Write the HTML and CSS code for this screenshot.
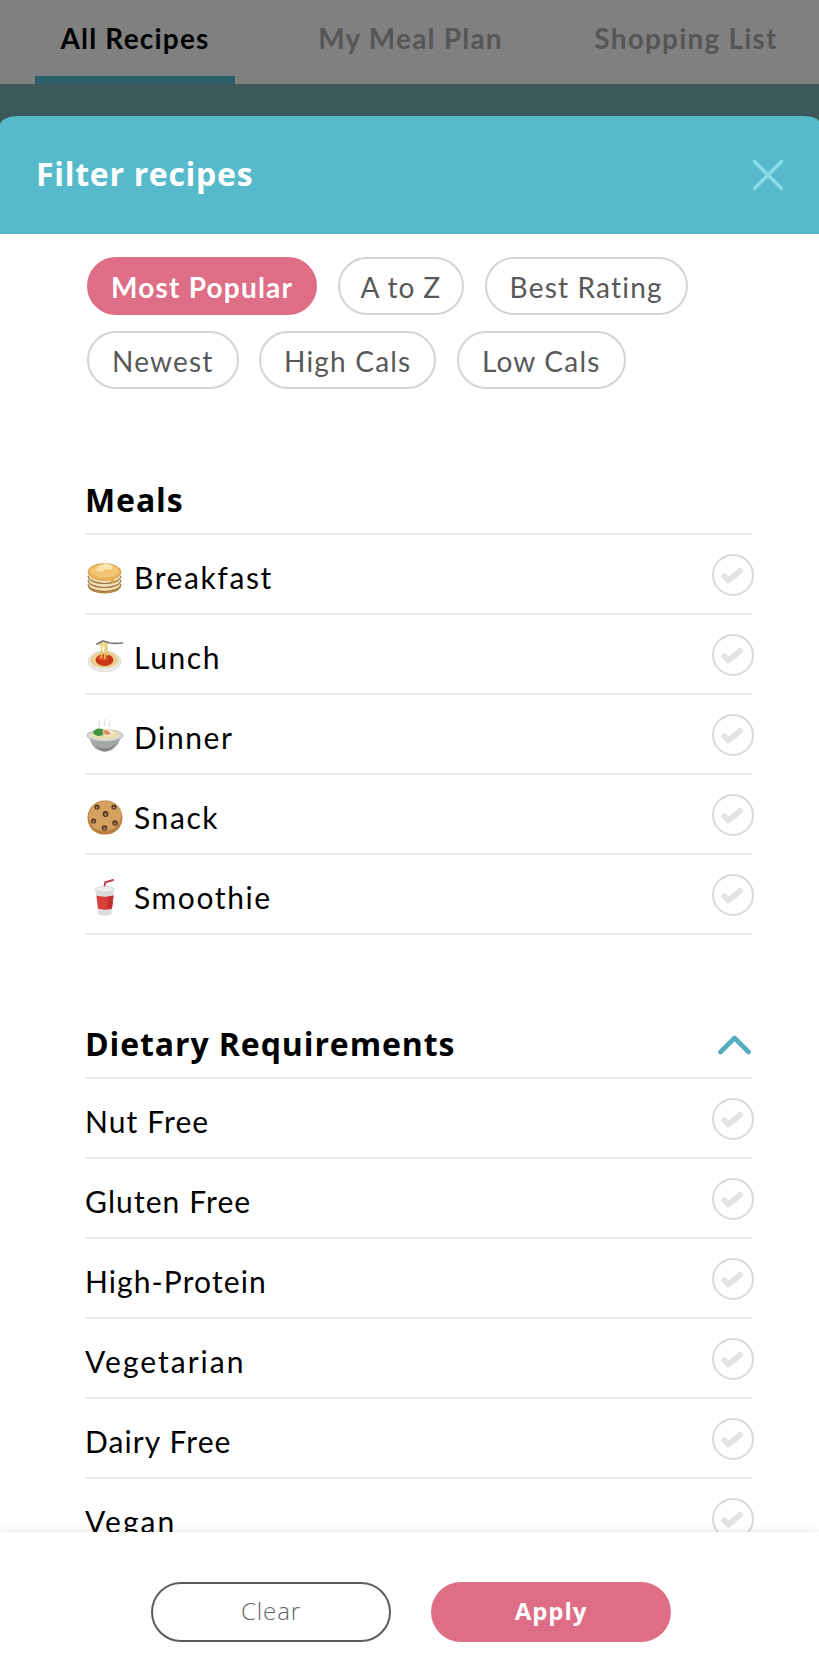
FILE: index.html
```html
<!DOCTYPE html>
<html lang="en">
  <head>
    <meta charset="UTF-8" />
    <meta name="viewport" content="width=device-width, initial-scale=1.0" />
    <title>Filter recipes</title>
    <link rel="stylesheet" href="styles.css" />
  </head>
  <body>
    <!-- shared check icon -->
    <svg class="defs" width="0" height="0">
      <symbol id="check" viewBox="0 0 42 42">
        <circle cx="21" cy="21" r="20" fill="#fff" stroke="#d9d9da" stroke-width="2" />
        <path d="M12.500 22.500 L16.500 26.500 L28 17" fill="none" stroke="#e3e3e4" stroke-width="6" stroke-linecap="round" stroke-linejoin="round" />
      </symbol>
    </svg>

    <nav class="tabs">
      <a class="tab active">All Recipes</a>
      <a class="tab">My Meal Plan</a>
      <a class="tab">Shopping List</a>
    </nav>

    <div class="sheet">
      <header class="sheet-header">
        <h1>Filter recipes</h1>
        <svg class="close" width="30" height="30" viewBox="0 0 30 30">
          <path d="M1.5 1.5 L28.5 28.5 M28.5 1.5 L1.5 28.5" />
        </svg>
      </header>

      <main class="content">
        <div class="chips">
          <button class="chip selected">Most Popular</button>
          <button class="chip chip-short">A to Z</button>
          <button class="chip">Best Rating</button>
          <button class="chip">Newest</button>
          <button class="chip">High Cals</button>
          <button class="chip">Low Cals</button>
        </div>

        <section>
          <div class="section-title"><h2>Meals</h2></div>
          <ul class="meals">
            <li>
              <svg class="emoji" viewBox="0 0 38 38">
                <path d="M2 13 V26 C2 37 35 37 35 26 V13Z" fill="#f3dfb5" />
                <path d="M2 17 C3 27 34 27 35 17 M2 21 C3 31 34 31 35 21 M2 25 C3 35 34 35 35 25" fill="none" stroke="#9c7443" stroke-width="1.2" />
                <path d="M2.5 27 C5 36 32 36 34.5 27" fill="none" stroke="#b98442" stroke-width="1.4" />
                <ellipse cx="18.5" cy="13" rx="16.5" ry="8.5" fill="#e9b45c" stroke="#d6994a" stroke-width=".8" />
                <ellipse cx="18.5" cy="12" rx="14" ry="6.5" fill="#f3c673" />
                <path d="M13 7 L20 4 L27 7 L25 11 L20 10 L16 13 L10 11Z" fill="#fbe7ac" />
                <path d="M24 21 L28 20 L27 25Z" fill="#e4a52e" />
              </svg>
              <span>Breakfast</span>
              <svg class="check"><use href="#check" /></svg>
            </li>
            <li>
              <svg class="emoji" viewBox="0 0 38 38">
                <ellipse cx="18.5" cy="22.5" rx="16.5" ry="10.5" fill="#e9e9e6" stroke="#d0d0cc" stroke-width=".6" />
                <ellipse cx="18.5" cy="21" rx="14" ry="8" fill="#edd695" />
                <ellipse cx="18.5" cy="20.5" rx="12.5" ry="7" fill="none" stroke="#d8b968" stroke-width=".8" stroke-dasharray="3 1" />
                <ellipse cx="18.5" cy="21" rx="9" ry="6" fill="#c93518" />
                <ellipse cx="17" cy="19" rx="5" ry="2.6" fill="#dd5324" />
                <path d="M16 4 C14 9 17 13 15 19 M19 4 C20 9 18 13 19 20 M21 5 C20 9 22 13 21 17" fill="none" stroke="#e8c767" stroke-width="1.5" />
                <path d="M12 6 C15 1 21 1 23 5 C20 8 15 8 12 6Z" fill="#efd98e" />
                <path d="M11 5 L17 2 L24 4 C29 5 32 4 36.5 4" fill="none" stroke="#77797b" stroke-width="1.7" stroke-linecap="round" />
              </svg>
              <span>Lunch</span>
              <svg class="check"><use href="#check" /></svg>
            </li>
            <li>
              <svg class="emoji" viewBox="0 0 38 38">
                <path d="M14 8 C11 5 15 4 13 1 M19 7 C17 4 20 3 19 0 M24 8 C21 5 25 4 24 1" fill="none" stroke="#dedede" stroke-width="1.3" />
                <path d="M3 17 C5 26 9 32 18.5 32.5 C28 32 33 26 35 17Z" fill="#a5a6a6" />
                <path d="M10 26 C14 30 24 31 29 25 C27 31 22 32.5 18.5 32.5 C15 32.5 12 30 10 26Z" fill="#858686" />
                <ellipse cx="19" cy="16.5" rx="18" ry="6" fill="#d6d8d4" stroke="#aaacab" stroke-width=".8" />
                <ellipse cx="19" cy="15.5" rx="14.5" ry="5" fill="#e8ddb2" />
                <path d="M7 14 C8 9 15 8 19 12 C19 17 11 19 7 14Z" fill="#3d943d" />
                <path d="M16 12 C19 8 27 9 29 14 L23 18 L18 16Z" fill="#f5e5cc" />
                <path d="M16 12 L21 11 L25 15 L20 16Z" fill="#da8d59" />
              </svg>
              <span>Dinner</span>
              <svg class="check"><use href="#check" /></svg>
            </li>
            <li>
              <svg class="emoji" viewBox="0 0 38 38">
                <path d="M19 1.5 C28 1 36 8 36.5 18 C37 28 29 36 19 35.5 C9 36 1 28 1.5 18 C2 8 10 1 19 1.5Z" fill="#b97e40" />
                <path d="M19 2 C28 2 35 8 35.5 16 C35 26 27 32 18 32 C9 32 3 26 2.5 17 C3 8 10 2 19 2Z" fill="#d4a160" />
                <g fill="#573520">
                  <circle cx="11" cy="8" r="2.6" /><circle cx="28" cy="8" r="2.6" />
                  <circle cx="19.5" cy="15" r="2.9" /><circle cx="7.5" cy="22" r="2.6" />
                  <circle cx="29" cy="24" r="2.7" /><circle cx="18.5" cy="29" r="2.8" />
                </g>
                <g fill="#a87c5a">
                  <circle cx="11" cy="8.5" r="1.2" /><circle cx="28" cy="8.5" r="1.2" />
                  <circle cx="19.5" cy="15.5" r="1.4" /><circle cx="7.5" cy="22.5" r="1.2" />
                  <circle cx="29" cy="24.5" r="1.2" /><circle cx="18.5" cy="29.5" r="1.4" />
                </g>
              </svg>
              <span>Snack</span>
              <svg class="check"><use href="#check" /></svg>
            </li>
            <li>
              <svg class="emoji" viewBox="0 0 38 38">
                <path d="M18.5 10 L19 3.5 L27 1" fill="none" stroke="#c4434a" stroke-width="2" stroke-linecap="round" stroke-linejoin="round" />
                <path d="M9.5 11 L12 34.5 C14 37.5 24 37.5 25.5 34.5 L28 11Z" fill="#dcdcde" />
                <path d="M10.5 16.5 C15 18 23 18 27.5 16.5 L26 29.5 C22 31 16 31 12 29.5Z" fill="#da3e39" />
                <path d="M22 17.6 L27.5 16.5 L26 29.5 L21.5 30.5Z" fill="#c22f2e" />
                <ellipse cx="18.7" cy="10.5" rx="9.5" ry="3" fill="#ededef" stroke="#cdcdd0" stroke-width=".8" />
              </svg>
              <span>Smoothie</span>
              <svg class="check"><use href="#check" /></svg>
            </li>
          </ul>
        </section>

        <section>
          <div class="section-title">
            <h2>Dietary Requirements</h2>
            <svg class="chevron" width="33" height="20" viewBox="0 0 33 20">
              <path d="M2.5 17 L16.5 3 L30.5 17" />
            </svg>
          </div>
          <ul>
            <li><span>Nut Free</span><svg class="check"><use href="#check" /></svg></li>
            <li><span>Gluten Free</span><svg class="check"><use href="#check" /></svg></li>
            <li><span>High-Protein</span><svg class="check"><use href="#check" /></svg></li>
            <li><span class="wide">Vegetarian</span><svg class="check"><use href="#check" /></svg></li>
            <li><span>Dairy Free</span><svg class="check"><use href="#check" /></svg></li>
            <li><span class="wide">Vegan</span><svg class="check"><use href="#check" /></svg></li>
          </ul>
        </section>
      </main>

      <footer class="actions">
        <button class="btn clear">Clear</button>
        <button class="btn apply">Apply</button>
      </footer>
    </div>
  </body>
</html>
```
FILE: styles.css
```css
* {
  box-sizing: border-box;
}

body {
  display: flex;
  flex-direction: column;
  height: 1655px;
  margin: 0;
  overflow: hidden;
  background-color: #3c5858;
  font-family: Lato, sans-serif;
  color: #000;
}

h1,
h2 {
  margin: 0;
  font-family: "Open Sans", sans-serif;
  font-size: 32px;
  font-weight: 700;
  line-height: 40px;
  letter-spacing: 0.9px;
}

h1 {
  margin-top: -3px;
  letter-spacing: 0.7px;
}

button {
  font-family: inherit;
  white-space: nowrap;
}

.defs {
  position: absolute;
}

/* tabs behind the sheet */
.tabs {
  display: flex;
  flex: none;
  justify-content: space-between;
  height: 84px;
  padding: 0 33px 0 35px;
  background-color: #808080;
}

.tab {
  width: 200px;
  height: 84px;
  padding-top: 18px;
  color: #565656;
  font-size: 28px;
  font-weight: 700;
  line-height: 40px;
  letter-spacing: 1.2px;
  text-align: center;
  white-space: nowrap;
}

.tab.active {
  color: #000;
  border-bottom: 8px solid #2a6068;
}

.sheet {
  display: flex;
  flex: 1;
  flex-direction: column;
  min-height: 0;
  margin-top: 32px;
}

.sheet-header {
  display: flex;
  flex: none;
  align-items: center;
  justify-content: space-between;
  height: 118px;
  padding: 0 36px 0 36px;
  background-color: #56bacb;
  border-radius: 17px 15px 0 0 / 9px 6px 0 0;
  color: #fff;
}

.close {
  fill: none;
  stroke: #8bdce8;
  stroke-width: 3.6;
  stroke-linecap: round;
}

.content {
  flex: 1;
  min-height: 0;
  overflow: hidden;
  padding: 23px 67px 0 85px;
  background-color: #fff;
}

.chips {
  display: flex;
  flex-wrap: wrap;
  gap: 16px 20.5px;
  padding-left: 2px;
}

.chip {
  height: 58px;
  padding: 2px 23px 0;
  background-color: #fff;
  border: 2px solid #d4d4d7;
  border-radius: 29px;
  color: #585858;
  font-size: 28px;
  letter-spacing: 1.2px;
}

.chip-short {
  padding: 2px 21px 0;
  letter-spacing: 0.9px;
}

.chip.selected {
  padding: 2px 22px 0;
  background-color: #de6e86;
  border-color: #de6e86;
  color: #fff;
  font-weight: 700;
}

section {
  margin-top: 84px;
}

.chips + section {
  margin-top: 86px;
}

.section-title {
  display: flex;
  align-items: center;
  justify-content: space-between;
  height: 60px;
  padding-bottom: 9px;
  border-bottom: 2px solid #e9e9ea;
}

.chevron {
  margin-top: 2px;
  margin-right: 1px;
  fill: none;
  stroke: #52aebd;
  stroke-width: 4.6;
  stroke-linecap: round;
  stroke-linejoin: round;
}

ul {
  margin: 0;
  padding: 0;
  list-style: none;
}

li {
  display: flex;
  align-items: center;
  height: 80px;
  border-bottom: 2px solid #e9e9ea;
  font-size: 30px;
  letter-spacing: 1.1px;
}

li span {
  flex: 1;
  padding-top: 5px;
  line-height: 40px;
}

.meals {
  letter-spacing: 1.6px;
}

.meals li {
  letter-spacing: inherit;
}

li .wide {
  letter-spacing: 2px;
}

.emoji {
  width: 38px;
  height: 38px;
  margin: 8px 10px 0 1px;
}

.check {
  width: 42px;
  height: 42px;
  margin: 2px -2px 0 0;
}

.actions {
  display: flex;
  flex: none;
  justify-content: center;
  gap: 40px;
  height: 123px;
  padding: 50px 0 0 3px;
  background-color: #fff;
  box-shadow: 0 0 8px rgba(0, 0, 0, 0.13);
}

.btn {
  width: 240px;
  height: 60px;
  padding: 0 0 3px;
  border-radius: 30px;
  font-family: "Open Sans", sans-serif;
  font-size: 24px;
  letter-spacing: 0.9px;
}

.clear {
  background-color: #fff;
  border: 2px solid #5c5c5c;
  color: #666;
  font-weight: 300;
}

.apply {
  background-color: #de6e86;
  border: none;
  color: #fff;
  font-weight: 700;
}
```
